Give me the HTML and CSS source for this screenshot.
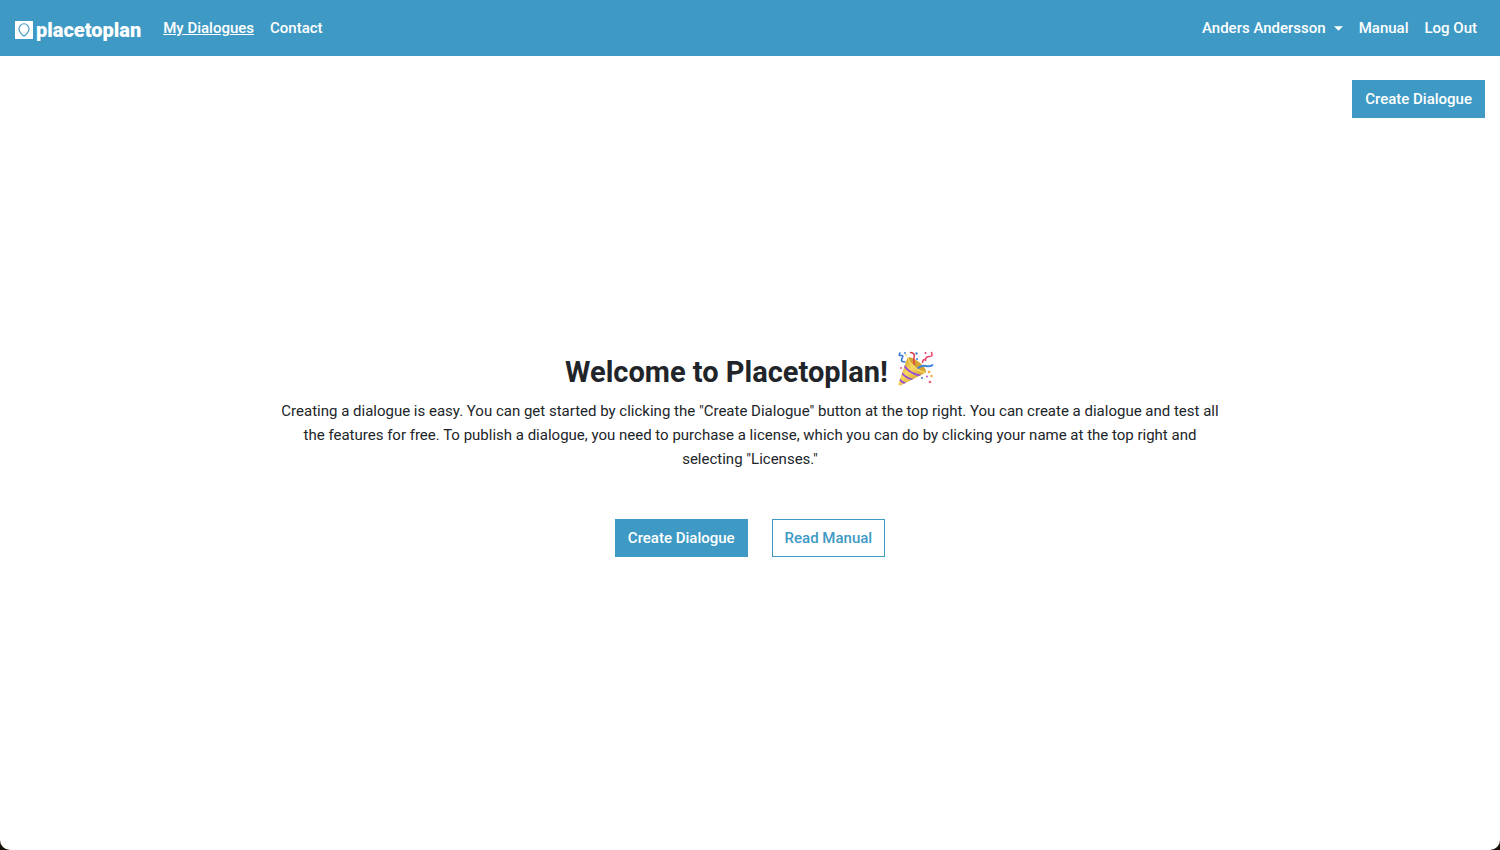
FILE: index.html
```html
<!DOCTYPE html>
<html lang="en">
<head>
<meta charset="utf-8">
<meta name="viewport" content="width=device-width, initial-scale=1">
<title>My Dialogues - Placetoplan</title>
<link rel="stylesheet" href="styles.css">
</head>
<body>
<div class="window">
  <header class="navbar">
    <a class="brand" href="#">
      <svg class="brand-mark" viewBox="0 0 18 18" aria-hidden="true">
        <path fill="#fff" d="M0 0h18v18H0z"/>
        <path fill="none" stroke="#3e9ac4" stroke-width="1.1" stroke-linejoin="round" d="M9 15.2C6.700 13.600 4 11.300 4 7.800a5 5 0 0 1 10 0c0 3.500-2.700 5.800-5 7.400z"/>
      </svg>
      <span class="brand-name">placetoplan</span>
    </a>
    <nav class="nav">
      <a class="nav-link active" href="#" aria-current="page">My Dialogues</a>
      <a class="nav-link" href="#">Contact</a>
    </nav>
    <nav class="nav nav-end" aria-label="Account">
      <button class="nav-link" type="button" aria-haspopup="true">Anders Andersson<svg class="caret" viewBox="0 0 10 5" aria-hidden="true"><path fill="#fff" d="M0 0h10L5 5z"/></svg></button>
      <a class="nav-link" href="#">Manual</a>
      <a class="nav-link" href="#">Log Out</a>
    </nav>
  </header>
  <main class="page">
    <div class="page-actions">
      <button class="btn btn-primary" type="button">Create Dialogue</button>
    </div>
    <section class="welcome">
      <h1 class="title">
        <span>Welcome to Placetoplan!</span>
        <svg class="popper" viewBox="0 0 38 38" role="img" aria-label="Party popper">
          <defs>
            <linearGradient id="gold" x1="0" y1="0.300" x2="0.700" y2="1">
              <stop offset="0" stop-color="#d9a22c"/>
              <stop offset=".4" stop-color="#f9d860"/>
              <stop offset="1" stop-color="#c8921f"/>
            </linearGradient>
            <clipPath id="cone"><path d="M10.500 7.500C16 8 26 15 29 22.500L3.500 35.500Q1 36 1.500 33.500z"/></clipPath>
          </defs>
          <path fill="url(#gold)" d="M10.500 7.500C16 8 26 15 29 22.500L3.500 35.500Q1 36 1.500 33.500z"/>
          <g clip-path="url(#cone)" fill="none" stroke="#9a4fd6" stroke-width="1.800">
            <path d="M6.500 14.500Q11 23 24 26M4 22Q8 28 17 30M2 28.500Q4 32 10 34"/>
          </g>
          <ellipse cx="20" cy="15" rx="11.300" ry="3.600" transform="rotate(39 20 15)" fill="#d8a431"/>
          <path fill="none" stroke="#fbe17a" stroke-width="1.200" d="M11 8C11.500 12.500 22 22.500 28.500 22.500"/>
          <g fill="none" stroke-linecap="round" stroke-width="1.600">
            <path stroke="#3a78d8" d="M3 3Q1 6 4 5.500T5 8.500T8 12"/>
            <path stroke="#dc3f52" d="M13.500 2.500Q18.500 3 17 7.500Q16 10.500 17.500 14"/>
            <path stroke="#e6476a" d="M34.500 2.500Q36.500 6.500 32.500 6.500T28.500 10Q26 8.500 25.500 12.500"/>
            <path stroke="#4385dc" stroke-width="2" d="M21 18Q25 15 29 16T35.500 15"/>
          </g>
          <g>
            <circle cx="8" cy="3" r=".9" fill="#3478d8"/>
            <circle cx="19.500" cy="3.500" r="1.200" fill="#4385dc"/>
            <circle cx="28.500" cy="3" r="1.100" fill="#e6476a"/>
            <circle cx="20" cy="9" r="1.100" fill="#4385dc"/>
            <circle cx="4" cy="18" r="1.100" fill="#ec627d"/>
            <circle cx="9" cy="5" r=".9" fill="#f5d75d"/>
            <circle cx="32" cy="22" r="1.300" fill="#f2a53a"/>
            <circle cx="34.500" cy="26" r="1.200" fill="#f2a53a"/>
            <circle cx="25" cy="28" r="1.100" fill="#4385dc"/>
            <circle cx="30" cy="26.500" r="1.100" fill="#b66ad5"/>
            <circle cx="33" cy="32" r="1.300" fill="#ec627d"/>
          </g>
        </svg>
      </h1>
      <p class="intro">Creating a dialogue is easy. You can get started by clicking the "Create Dialogue" button at the top right. You can create a dialogue and test all the features for free. To publish a dialogue, you need to purchase a license, which you can do by clicking your name at the top right and selecting "Licenses."</p>
      <div class="welcome-actions">
        <button class="btn btn-primary" type="button">Create Dialogue</button>
        <a class="btn btn-outline" href="#">Read Manual</a>
      </div>
    </section>
  </main>
</div>
</body>
</html>
```
FILE: styles.css
```css
:root {
  --blue: #3e9ac4;
  --ink: #212529;
  --font: Roboto, "Liberation Sans", sans-serif;
}

* {
  box-sizing: border-box;
}

html {
  background: #17110a;
}

body {
  margin: 0;
  color: var(--ink);
  font: 400 15px/24px var(--font);
}

.window {
  display: flex;
  flex-direction: column;
  min-height: 100vh;
  background: #fff;
  border-radius: 0 0 10px 10px;
}

.navbar {
  display: flex;
  flex-wrap: wrap;
  align-items: center;
  padding: 8px 15px;
  background: var(--blue);
}

.brand {
  display: flex;
  align-items: center;
  gap: 3px;
  margin-right: 14px;
  padding-top: 3px;
  color: #fff;
  text-decoration: none;
}

.brand-mark {
  width: 18px;
  height: 18px;
}

.brand-name {
  font: 900 20px/24px var(--font);
}

.nav {
  display: flex;
  align-items: center;
}

.nav-end {
  margin-left: auto;
}

.nav-link {
  display: flex;
  align-items: center;
  gap: 8px;
  padding: 8px;
  border: 0;
  background: none;
  color: #fff;
  font: 500 15px/24px var(--font);
  text-decoration: none;
  cursor: pointer;
}

.nav-link.active {
  text-decoration: underline;
}

.caret {
  width: 9px;
  height: 5px;
}

.page {
  display: grid;
  flex: 1;
  grid-template-rows: 1fr auto 1fr;
}

.page-actions {
  display: flex;
  align-items: flex-start;
  justify-content: flex-end;
  padding: 24px 15px;
}

.welcome {
  width: 66.667%;
  margin: 0 auto;
  padding: 0 24px;
  text-align: center;
}

.title {
  display: flex;
  align-items: center;
  justify-content: center;
  gap: 9px;
  margin: 0 0 4px;
  font: 700 29px/46px var(--font);
}

.popper {
  width: 38px;
  height: 38px;
  margin-bottom: 6px;
}

.intro {
  margin: 0 0 48px;
}

.welcome-actions {
  display: flex;
  flex-wrap: wrap;
  justify-content: center;
  gap: 24px;
}

.btn {
  padding: 6px 12px;
  border: 1px solid var(--blue);
  font: 500 15px/24px var(--font);
  text-decoration: none;
  cursor: pointer;
}

.btn-primary {
  background: var(--blue);
  color: #fff;
}

.btn-outline {
  background: #fff;
  color: var(--blue);
}
```
